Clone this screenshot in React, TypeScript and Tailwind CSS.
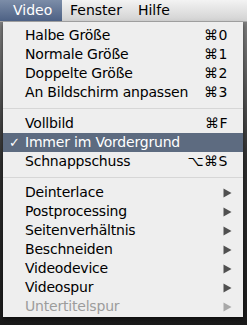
type Item =
  | { sep: true }
  | { label: string; key?: string; sub?: boolean; checked?: boolean; active?: boolean; disabled?: boolean; sep?: false };

const items: Item[] = [
  { label: "Halbe Größe", key: "⌘0" },
  { label: "Normale Größe", key: "⌘1" },
  { label: "Doppelte Größe", key: "⌘2" },
  { label: "An Bildschirm anpassen", key: "⌘3" },
  { sep: true },
  { label: "Vollbild", key: "⌘F" },
  { label: "Immer im Vordergrund", checked: true, active: true },
  { label: "Schnappschuss", key: "⌥⌘S" },
  { sep: true },
  { label: "Deinterlace", sub: true },
  { label: "Postprocessing", sub: true },
  { label: "Seitenverhältnis", sub: true },
  { label: "Beschneiden", sub: true },
  { label: "Videodevice", sub: true },
  { label: "Videospur", sub: true },
  { label: "Untertitelspur", sub: true, disabled: true },
];

const Arrow = ({ color }: { color: string }) => (
  <svg width="9" height="10" viewBox="0 0 9 10">
    <path d="M0.5 0.5 L8.5 5 L0.5 9.5 Z" fill={color} />
  </svg>
);

export default function App() {
  return (
    <div
      className="w-[247px] h-[325px] overflow-hidden bg-gradient-to-b from-[#8a8a8a] via-[#2e2e2e] to-[#1a1a1a]"
      style={{ fontFamily: '"DejaVu Sans", "Lucida Grande", sans-serif' }}
    >
      {/* menubar */}
      <div className="h-[22px] flex items-stretch bg-gradient-to-b from-[#f3f3f3] to-[#d2d2d2] border-b border-[#a8a8a8] text-[14px] text-black">
        <div className="w-[62px] flex items-center pl-[13px] text-white bg-gradient-to-b from-[#7c8da8] to-[#4d6184]">
          Video
        </div>
        <div className="flex items-center pl-[8px]">Fenster</div>
        <div className="flex items-center pl-[16px]">Hilfe</div>
      </div>

      {/* dropdown */}
      <div className="mx-[3px] w-[240px] bg-[#eeeeee] pt-[4px] pb-[1px] shadow-[0_2px_4px_rgba(0,0,0,0.5)]">
        {items.map((it, i) =>
          it.sep ? (
            <div key={i} className="h-[12px] flex items-center">
              <div className="w-full h-px bg-[#d6d6d6]" />
            </div>
          ) : (
            <div
              key={i}
              className={`h-[19px] flex items-center text-[14px] ${
                it.active ? "bg-[#5d6b80] text-white" : it.disabled ? "text-[#9c9c9c]" : "text-black"
              }`}
            >
              <div className="w-[22px] pl-[6px] text-[13px] leading-none">{it.checked ? "✓" : ""}</div>
              <div className="flex-1 tracking-[-0.2px]">{it.label}</div>
              {it.key && <div className="pr-[15px] tracking-[0.5px]">{it.key}</div>}
              {it.sub && (
                <div className="pr-[11px] flex items-center">
                  <Arrow color={it.disabled ? "#a8a8a8" : "#505050"} />
                </div>
              )}
            </div>
          )
        )}
      </div>
    </div>
  );
}
